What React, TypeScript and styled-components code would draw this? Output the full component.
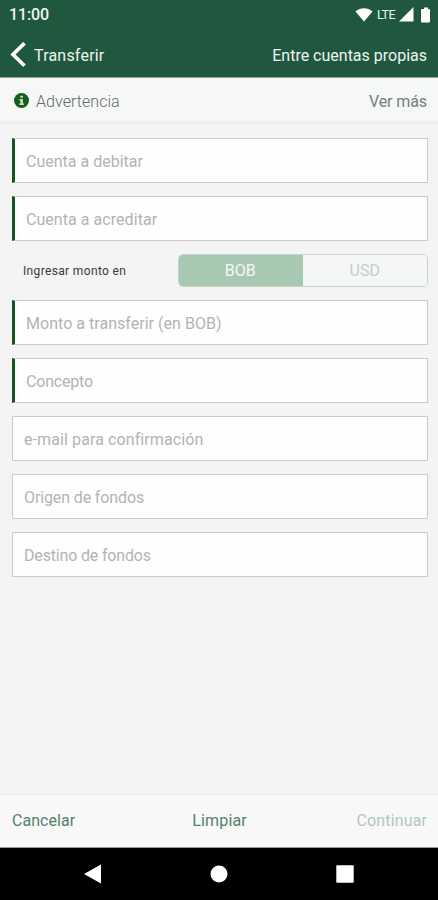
import React from "react";
import styled, { createGlobalStyle } from "styled-components";

const GlobalStyle = createGlobalStyle`
  * { box-sizing: border-box; }
  body { margin: 0; background: #f4f4f4; }
`;

const Screen = styled.div`
  display: flex;
  flex-direction: column;
  width: 438px;
  height: 900px;
  overflow: hidden;
  background: #f4f4f4;
  font-family: Roboto, "Open Sans", sans-serif;
  font-size: 16px;
`;

const Text = styled.span<{ $tracking?: number }>`
  letter-spacing: ${(p) => p.$tracking ?? 0}px;
  margin-right: ${(p) => -(p.$tracking ?? 0)}px;
  white-space: nowrap;
`;

const Header = styled.header`
  height: 78px;
  background: #20573f;
  border-bottom: 1px solid #8fa79b;
  color: #edf5ef;
`;

const StatusBar = styled.div`
  display: flex;
  align-items: center;
  justify-content: space-between;
  height: 29px;
  padding: 0 7px 0 9px;
  font-weight: 500;
`;

const StatusIcons = styled.div`
  display: flex;
  align-items: center;
  height: 28px;
`;

const Network = styled.span`
  width: 20px;
  margin: 0 2px 0 4px;
  font-size: 12.5px;
  font-weight: 400;
  letter-spacing: -0.5px;
`;

const TitleBar = styled.div`
  display: flex;
  align-items: center;
  justify-content: space-between;
  height: 51px;
  padding: 1px 11px 0 10px;
`;

const Back = styled.button`
  display: flex;
  align-items: center;
  gap: 7px;
  padding: 0;
  border: 0;
  background: none;
  color: inherit;
  font: inherit;
`;

const Notice = styled.section`
  display: flex;
  align-items: center;
  height: 46px;
  padding: 3px 11px 0 14px;
  border-bottom: 3px solid #efefef;
  background: #f6f7f7;
  color: #66696b;
  font-weight: 300;
`;

const NoticeLabel = styled.div`
  display: flex;
  align-items: center;
  flex: 1;
  gap: 7px;
`;

const More = styled.a`
  color: #6d8377;
  font-weight: 400;
`;

const Form = styled.main`
  display: flex;
  flex: 1;
  flex-direction: column;
  gap: 13px;
  padding: 14px 10px 0 12px;
`;

const Field = styled.div<{ $required?: boolean }>`
  display: flex;
  align-items: center;
  height: 45px;
  padding: 1px 0 0 11px;
  border: 1px solid #cbcbcb;
  border-radius: ${(p) => (p.$required ? "0" : "1px")};
  border-left: ${(p) => (p.$required ? "3px solid #175323" : "1px solid #cbcbcb")};
  background: #fefefe;
  color: #b0b4b6;
`;

const CurrencyRow = styled.div`
  display: flex;
  align-items: center;
  justify-content: space-between;
  height: 33px;
  padding-left: 11px;
  color: #373c3a;
  font-size: 12px;
`;

const Segments = styled.div`
  display: flex;
  width: 250px;
  height: 33px;
  overflow: hidden;
  border: 1px solid #c6d4cd;
  border-radius: 5px;
`;

const Segment = styled.div<{ $active?: boolean }>`
  display: flex;
  flex: 1;
  align-items: center;
  justify-content: center;
  margin: ${(p) => (p.$active ? "-1px 0 -1px -1px" : "0")};
  background: ${(p) => (p.$active ? "#a9c8b2" : "#f5f7f6")};
  color: ${(p) => (p.$active ? "#f3f9f4" : "#c1d0c8")};
  font-size: 16px;
`;

const Footer = styled.footer`
  display: grid;
  grid-template-columns: 1fr 1fr 1fr;
  align-items: center;
  height: 54px;
  padding: 0 11px 1px 12px;
  border-top: 1px solid #ececec;
  border-bottom: 1px solid #999;
  background: #f7f8f7;
`;

const Action = styled.div<{ $align: string; $disabled?: boolean }>`
  text-align: ${(p) => p.$align};
  color: ${(p) => (p.$disabled ? "#b1c7bb" : "#55806b")};
`;

const Navigation = styled.nav`
  display: flex;
  justify-content: center;
  align-items: center;
  gap: 108px;
  height: 52px;
  background: #000;
`;

const FIELDS_TOP = [
  { label: "Cuenta a debitar", tracking: 0 },
  { label: "Cuenta a acreditar", tracking: 0.05 },
];
const FIELDS_BOTTOM = [
  { label: "Monto a transferir (en BOB)", tracking: 0.03, required: true },
  { label: "Concepto", tracking: -0.2, required: true },
  { label: "e-mail para confirmación", tracking: 0.1 },
  { label: "Origen de fondos", tracking: -0.12 },
  { label: "Destino de fondos", tracking: -0.17 },
];

export default function App() {
  return (
    <>
      <GlobalStyle />
      <Screen>
        <Header>
          <StatusBar>
            <Text $tracking={-0.1}>11:00</Text>
            <StatusIcons>
              <svg width="18" height="15" viewBox="0 0 18 15" fill="#fff">
                <path d="M0.5 4.5C5.5 0.2 12.5 0.2 17.5 4.5L9 14.5Z" />
              </svg>
              <Network>LTE</Network>
              <svg width="15" height="15" viewBox="0 0 15 15" fill="#fff">
                <path d="M14.5 0V14.5H0Z" />
              </svg>
              <svg width="17" height="16" viewBox="0 0 17 16" fill="#fff">
                <path d="M9 2H10V.5H14V2H15Q16 2 16 3V14.5Q16 15.5 15 15.5H8Q7 15.5 7 14.5V3Q7 2 8 2Z" />
              </svg>
            </StatusIcons>
          </StatusBar>
          <TitleBar>
            <Back>
              <svg width="17" height="26" viewBox="0 0 17 26" fill="none" stroke="#fff" strokeWidth="3.7">
                <path d="M14.5 1.2L3 12.5L14.5 23.8" />
              </svg>
              <Text $tracking={0.2}>Transferir</Text>
            </Back>
            <Text>Entre cuentas propias</Text>
          </TitleBar>
        </Header>
        <Notice>
          <NoticeLabel>
            <svg width="15" height="16" viewBox="0 0 15 16">
              <circle cx="7.5" cy="7.5" r="7.5" fill="#126019" />
              <path d="M6.3 2.7H9V4.7H6.3ZM5.3 6H9V10.5H10V12.1H5.2V10.5H6.3V7.5H5.3Z" fill="#bfd9c0" />
            </svg>
            <Text $tracking={0.05}>Advertencia</Text>
          </NoticeLabel>
          <More><Text $tracking={-0.1}>Ver más</Text></More>
        </Notice>
        <Form>
          {FIELDS_TOP.map((f) => (
            <Field key={f.label} $required>
              <Text $tracking={f.tracking}>{f.label}</Text>
            </Field>
          ))}
          <CurrencyRow>
            <Text $tracking={0.35}>Ingresar monto en</Text>
            <Segments>
              <Segment $active><Text>BOB</Text></Segment>
              <Segment><Text>USD</Text></Segment>
            </Segments>
          </CurrencyRow>
          {FIELDS_BOTTOM.map((f) => (
            <Field key={f.label} $required={f.required}>
              <Text $tracking={f.tracking}>{f.label}</Text>
            </Field>
          ))}
        </Form>
        <Footer>
          <Action $align="left"><Text $tracking={0.05}>Cancelar</Text></Action>
          <Action $align="center"><Text $tracking={0.15}>Limpiar</Text></Action>
          <Action $align="right" $disabled><Text $tracking={0.15}>Continuar</Text></Action>
        </Footer>
        <Navigation>
          <svg width="18" height="20" viewBox="0 0 18 20" fill="#fff"><path d="M0 10L17 .5V19.5Z" /></svg>
          <svg width="18" height="18" viewBox="0 0 18 18" fill="#fff"><circle cx="9" cy="9" r="8.5" /></svg>
          <svg width="18" height="18" viewBox="0 0 18 18" fill="#fff"><rect x=".3" y=".3" width="17.4" height="17.4" rx="1" /></svg>
        </Navigation>
      </Screen>
    </>
  );
}
